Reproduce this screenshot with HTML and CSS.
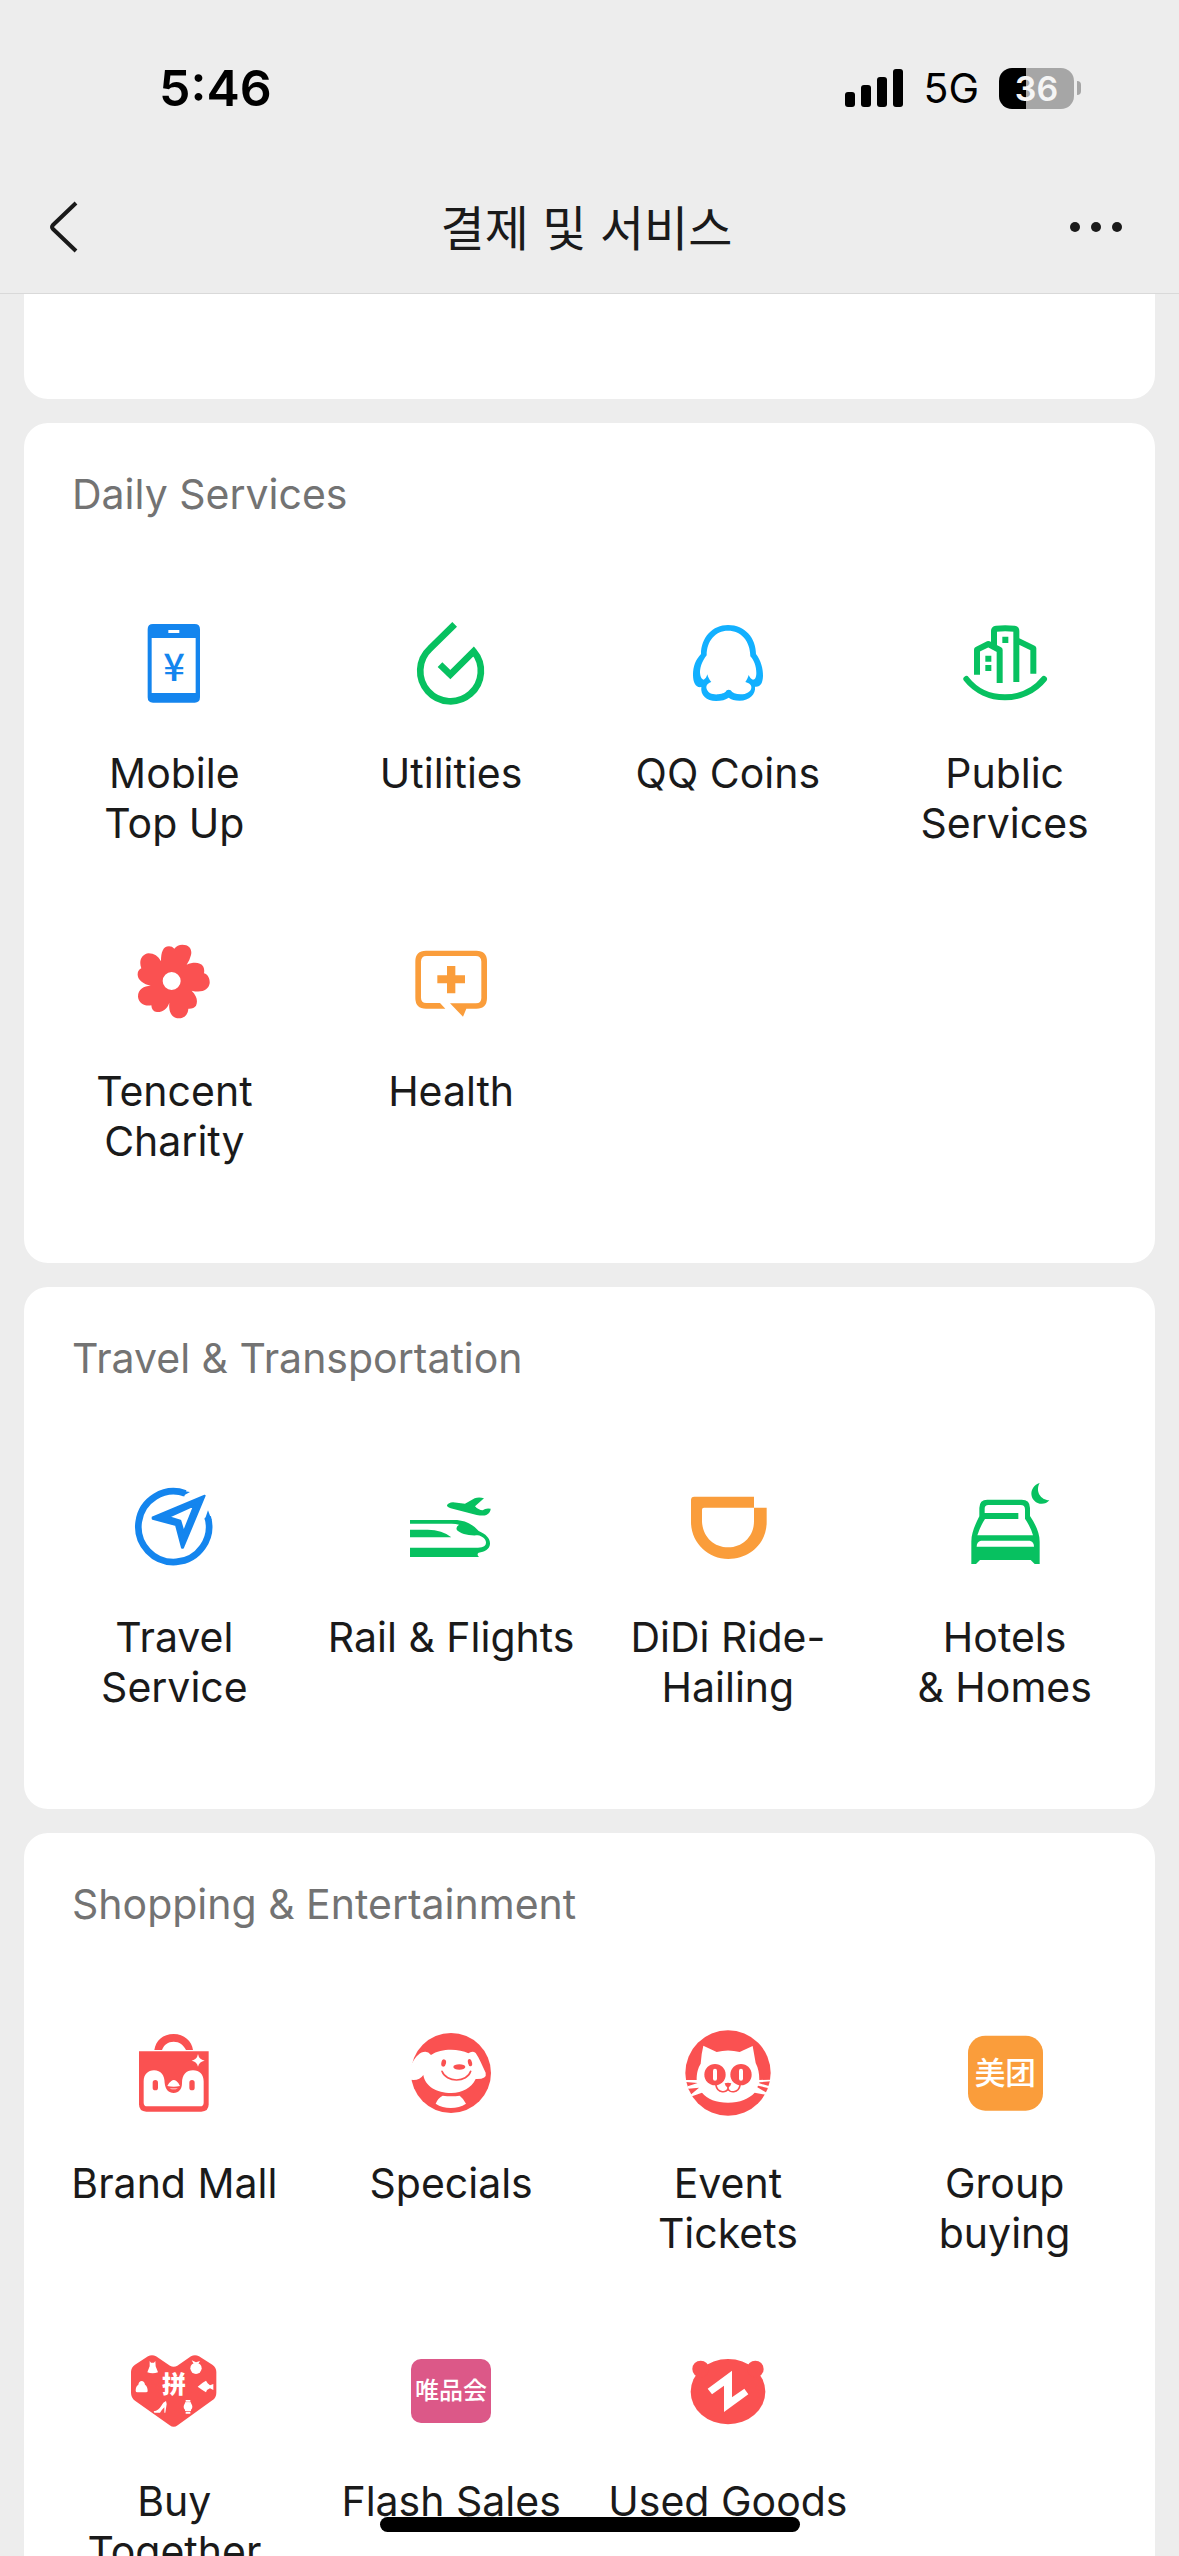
FILE: index.html
```html
<!DOCTYPE html>
<html lang="ko">
<head>
    <meta charset="UTF-8">
    <meta name="viewport" content="width=device-width, initial-scale=1.0">
    <title>결제 및 서비스</title>
    <link rel="stylesheet" href="styles.css">
</head>
<body>
    <div class="screen">
        <header class="header">
            <div class="status-bar">
                <span class="time">5:46</span>
                <div class="status-right">
                    <svg class="signal" viewBox="0 0 58 38" aria-hidden="true">
                        <rect x="0" y="23" width="10" height="15" rx="3"/>
                        <rect x="16" y="16" width="10" height="22" rx="3"/>
                        <rect x="32" y="8" width="10" height="30" rx="3"/>
                        <rect x="48" y="0" width="10" height="38" rx="3"/>
                    </svg>
                    <span class="network">5G</span>
                    <div class="battery">
                        <span class="battery-level">36</span>
                        <span class="battery-cap"></span>
                    </div>
                </div>
            </div>
            <nav class="nav-bar">
                <button class="nav-btn" aria-label="Back">
                    <svg class="back-icon" viewBox="0 0 28 52"><path d="M26 2 3 24q-2 2 0 4L26 50"/></svg>
                </button>
                <h1>결제 및 서비스</h1>
                <button class="nav-btn nav-more" aria-label="More">
                    <svg class="more-icon" viewBox="0 0 54 12"><circle cx="6" cy="6" r="5"/><circle cx="27" cy="6" r="5"/><circle cx="48" cy="6" r="5"/></svg>
                </button>
            </nav>
        </header>

        <main class="content">
            <section class="card card-cut"></section>

            <section class="card">
                <h2>Daily Services</h2>
                <div class="grid">
                    <a class="item" href="#">
                        <svg class="icon blue" viewBox="79 45 288 288">
                            <path fill-rule="evenodd" d="M160 72H285Q301 72 301 88V292Q301 308 285 308H160Q144 308 144 292V88Q144 72 160 72ZM156 114V279H288V114ZM206 90V99H239V90Z"/>
                            <text class="yen" x="223" y="243">¥</text>
                        </svg>
                        <span>Mobile<br>Top Up</span>
                    </a>
                    <a class="item" href="#">
                        <svg class="icon green line" viewBox="909 45 288 288">
                            <path stroke-width="20" d="M1064 73 990 146A91 91 0 1 0 1121 154L1051 224 1020 194"/>
                        </svg>
                        <span>Utilities</span>
                    </a>
                    <a class="item" href="#">
                        <svg class="icon sky" viewBox="60 45 288 288">
                            <path fill-rule="evenodd" d="M204 75C255 75 288 114 288 162C303 181 310 208 309 229C308 250 301 262 285 260C288 282 268 302 239 302C225 302 213 299 206 293C198 299 184 303 168 303C139 303 121 286 124 261C108 264 99 249 99 225C99 199 107 179 123 162C123 112 158 75 204 75ZM204 92C166 92 140 123 140 166C126 183 117 207 121 226C123 235 127 239 131 239C136 237 140 231 142 223C144 232 148 239 154 246C142 250 137 257 140 267C145 280 157 284 174 283C190 282 197 277 200 271Q206 267 212 271C217 279 227 283 242 283C259 283 273 275 274 263C275 255 268 249 256 246C261 239 264 232 266 225C269 232 273 237 279 239C285 239 289 232 289 219C289 199 282 181 271 169C271 123 243 92 204 92Z"/>
                        </svg>
                        <span>QQ Coins</span>
                    </a>
                    <a class="item" href="#">
                        <svg class="icon green" viewBox="890 45 288 288">
                            <g class="line" stroke-width="18">
                                <path stroke-linejoin="round" d="M950 224V149L984 132 1018 150V249M1001 136V93Q1001 87 1008 86Q1034 83 1062 86Q1068 87 1068 93V246M1070 121 1119 145V221"/>
                                <path stroke-linecap="round" d="M918 237C975 310 1092 310 1151 237"/>
                            </g>
                            <path d="M1026 110H1044V129H1026ZM975 167H993V185H975ZM975 195H993V213H975Z"/>
                        </svg>
                        <span>Public<br>Services</span>
                    </a>
                    <a class="item" href="#">
                        <svg class="icon red" viewBox="79 39 288 288">
                            <path fill-rule="evenodd" d="M184 124C184 97 190 79 208 79Q218 79 224 86Q233 74 248 74C269 74 278 88 274 105Q270 122 261 134C281 126 302 126 311 140Q315 148 313 160C326 164 331 177 330 190C327 210 306 220 276 212C292 229 295 243 289 257Q282 267 266 266C265 284 253 295 238 295C216 295 206 276 209 248C202 268 188 277 172 276Q156 275 155 256C135 260 117 250 115 230C115 207 133 198 153 197C132 193 115 181 114 165Q113 151 125 145C116 122 127 102 147 100C163 100 176 108 184 124ZM216 156A27 27 0 1 0 216 210A27 27 0 1 0 216 156Z"/>
                        </svg>
                        <span>Tencent<br>Charity</span>
                    </a>
                    <a class="item" href="#">
                        <svg class="icon orange" viewBox="909 39 288 288">
                            <path fill-rule="evenodd" d="M978 92H1129Q1161 92 1161 124V234Q1161 266 1129 266H1099L1089 290 1050 250H1128Q1144 250 1144 234V125Q1144 108 1127 108H979Q963 108 963 125V233Q963 249 979 249H1020L1036 266H978Q946 266 946 234V124Q946 92 978 92ZM1041 138H1066V166H1095V190H1066V220H1041V190H1012V166H1041Z"/>
                        </svg>
                        <span>Health</span>
                    </a>
                </div>
            </section>

            <section class="card">
                <h2>Travel &amp; Transportation</h2>
                <div class="grid">
                    <a class="item" href="#">
                        <svg class="icon blue" viewBox="79 57 288 288">
                            <path class="line" stroke-width="20" d="M257 100A106 106 0 1 0 324 171"/>
                            <path d="M271 96 248 109 238 91ZM325 151 336 180 315 180Z"/>
                            <path fill-rule="evenodd" stroke="#1485ee" stroke-width="6" stroke-linejoin="round" d="M315 107 250 263H247L229 195 159 176V172ZM284 136 206 171 242 182 252 216Z"/>
                        </svg>
                        <span>Travel<br>Service</span>
                    </a>
                    <a class="item" href="#">
                        <svg class="icon green" viewBox="909 57 288 288">
                            <path d="M1041 136Q1045 128 1059 127L1095 131 1124 115Q1137 110 1152 115L1125 139Q1135 150 1148 151Q1157 143 1172 146Q1172 157 1159 165Q1150 168 1130 165L1052 145Q1040 141 1041 136Z"/>
                            <path d="M930 180H1063C1095 180 1117 192 1136 213C1158 222 1171 236 1170 252C1169 268 1154 275 1136 278Q1129 283 1137 291H930V263H1134C1151 263 1158 258 1158 247C1157 237 1147 228 1133 226C1105 228 1082 221 1071 211Q1066 201 1077 194Q1068 191 1055 191H930ZM930 209H983Q1027 209 1054 232H930Z"/>
                        </svg>
                        <span>Rail &amp; Flights</span>
                    </a>
                    <a class="item" href="#">
                        <svg class="icon orange" viewBox="60 57 288 288">
                            <path fill-rule="evenodd" d="M103 110H282V143H320V188C319 250 270 297 205 297C143 297 93 247 93 186V120Q93 110 103 110ZM132 143Q126 143 126 149V186C129 230 160 262 205 262C248 262 282 229 282 184V143Z"/>
                        </svg>
                        <span>DiDi Ride-<br>Hailing</span>
                    </a>
                    <a class="item" href="#">
                        <svg class="icon green" viewBox="890 57 288 288">
                            <path d="M1138 69C1124 94 1141 120 1167 121C1160 130 1149 133 1138 131C1106 123 1104 80 1138 69Z"/>
                            <path fill-rule="evenodd" d="M981 119H1084Q1109 119 1109 144V168C1127 195 1138 220 1138 245V312H1123L1111 300H959L947 312H933V245C933 218 945 193 957 169V144Q957 119 981 119ZM984 135Q973 135 973 146V159H1074V177H974Q960 198 951 226H1118Q1110 199 1094 176V148Q1094 135 1081 135ZM962 242Q949 245 949 260H1121Q1121 245 1108 242Z"/>
                        </svg>
                        <span>Hotels<br>&amp; Homes</span>
                    </a>
                </div>
            </section>

            <section class="card">
                <h2>Shopping &amp; Entertainment</h2>
                <div class="grid">
                    <a class="item" href="#">
                        <svg class="icon red" viewBox="79 45 288 288">
                            <path d="M164 120C168 92 190 72 222 72C253 72 277 93 280 120H259C252 105 239 95 222 95C205 95 193 104 187 120Z"/>
                            <path d="M118 124H327V283Q327 305 305 305H140Q118 305 118 283Z"/>
                            <g class="white">
                                <path d="M295 132Q298 149 315 152Q298 155 295 170Q292 155 276 152Q292 149 295 132Z"/>
                                <path d="M132 214C132 193 145 181 163 181C184 181 195 196 195 219C197 239 207 249 222 249C237 249 247 238 247 219C247 194 260 181 280 181C300 181 312 194 312 214V278Q312 289 301 289H143Q132 289 132 278Z"/>
                            </g>
                            <rect x="159" y="210" width="16" height="31" rx="8"/>
                            <rect x="269" y="210" width="16" height="31" rx="8"/>
                            <path d="M203 230H241Q237 243 222 243Q207 243 203 230Z"/>
                            <path class="white" d="M203 228Q206 219 215 213Q222 207 230 213Q238 219 241 228Q222 232 203 228ZM209 234Q222 237 235 234L228 238H216Z"/>
                        </svg>
                        <span>Brand Mall</span>
                    </a>
                    <a class="item" href="#">
                        <svg class="icon red" viewBox="909 45 288 288">
                            <circle cx="1053" cy="189" r="120"/>
                            <path class="white" d="M932 168C943 146 955 129 970 126Q983 122 993 135C1024 114 1077 116 1105 130Q1117 121 1127 129C1138 145 1147 167 1157 188Q1162 208 1127 207C1114 234 1088 248 1054 249C1009 249 975 228 970 195Q960 210 941 210L932 209Z"/>
                            <path class="white" d="M1028 257Q1055 260 1079 257Q1091 266 1098 281Q1078 294 1052 294Q1027 294 1007 281Q1013 265 1028 257Z"/>
                            <ellipse cx="1031" cy="159" rx="7" ry="11" transform="rotate(12 1031 159)"/>
                            <ellipse cx="1110" cy="158" rx="6" ry="11" transform="rotate(-14 1110 158)"/>
                            <ellipse cx="1078" cy="171" rx="18" ry="8"/>
                            <path class="line-red" stroke-width="5" d="M1026 184C1039 219 1101 218 1112 184"/>
                        </svg>
                        <span>Specials</span>
                    </a>
                    <a class="item" href="#">
                        <svg class="icon red" viewBox="60 45 288 288">
                            <circle cx="204" cy="189" r="128"/>
                            <path class="white" d="M130 107 170 126Q204 117 239 126L278 108 287 159Q298 180 298 210L331 209V214L298 217V220L329 229 327 235 294 227 292 232 320 248 316 254 284 248C267 266 240 278 204 278C169 278 142 267 126 248L96 259 92 254 117 233 85 236 83 229 113 219 78 216V210H110C110 188 114 174 122 161Q124 131 130 107Z"/>
                            <circle cx="165" cy="194" r="32"/>
                            <circle cx="243" cy="194" r="32"/>
                            <rect class="white" x="159" y="176" width="12" height="36" rx="6"/>
                            <rect class="white" x="237" y="176" width="12" height="36" rx="6"/>
                            <path d="M194 220Q204 216 214 220Q213 229 204 233Q195 229 194 220Z"/>
                            <path class="line-red" stroke-width="5" d="M204 229V236M168 226C172 250 202 250 204 235C207 250 236 250 240 226"/>
                        </svg>
                        <span>Event<br>Tickets</span>
                    </a>
                    <a class="item" href="#">
                        <svg class="icon orange" viewBox="890 45 288 288">
                            <rect x="923" y="77" width="225" height="225" rx="52"/>
                            <text class="logo-text meituan" x="1035" y="223">美团</text>
                        </svg>
                        <span>Group<br>buying</span>
                    </a>
                    <a class="item" href="#">
                        <svg class="icon red" viewBox="79 39 288 288">
                            <path d="M145 79Q157 72 169 79L211 107Q222 113 233 107L274 79Q286 72 298 79L338 104Q350 112 350 126V188Q350 203 338 211L234 286Q222 295 210 286L106 212Q94 203 94 188V126Q94 112 106 104Z"/>
                            <text class="logo-text pin" x="223" y="190">拼</text>
                            <g class="white">
                                <path d="M150 93 154 98H163L167 93 168 109 175 127Q159 133 143 127L150 109Z"/>
                                <circle cx="289" cy="115" r="17"/>
                                <path d="M276 91 289 97 301 93 296 101H282Z"/>
                                <path d="M108 183Q108 168 116 164Q118 153 126 153Q134 153 136 164Q144 169 144 183Q144 187 139 187H113Q108 187 108 183Z"/>
                                <path d="M294 170 309 158 319 152 324 160 331 166 341 162V180L331 175 322 180 319 187 308 180Z"/>
                                <path d="M162 244Q177 241 185 227 190 216 199 213L201 222 197 248H194V232Q187 239 181 248H164Z"/>
                                <circle cx="265" cy="230" r="13"/>
                                <path d="M258 210H272V215H258ZM256 217H274V243H256ZM258 245H272V251H258Z"/>
                            </g>
                        </svg>
                        <span>Buy<br>Together</span>
                    </a>
                    <a class="item" href="#">
                        <svg class="icon pink" viewBox="909 39 288 288">
                            <rect x="933" y="87" width="240" height="192" rx="30"/>
                            <text class="logo-text vip" x="1053" y="208">唯品会</text>
                        </svg>
                        <span>Flash Sales</span>
                    </a>
                    <a class="item" href="#">
                        <svg class="icon red" viewBox="240 39 288 288">
                            <ellipse cx="384" cy="185" rx="112" ry="98"/>
                            <circle cx="302" cy="117" r="25"/>
                            <circle cx="466" cy="117" r="25"/>
                            <path class="white" d="M323 176 396 122V202L433 176 445 193 372 246V167L336 193Z"/>
                        </svg>
                        <span>Used Goods</span>
                    </a>
                </div>
            </section>
        </main>

        <div class="home-indicator"></div>
    </div>
</body>
</html>
```
FILE: styles.css
```css
* {
    box-sizing: border-box;
}
body {
    margin: 0;
    background-color: #ededed;
    color: #1a1a1a;
    font-family: Inter, 'Noto Sans CJK KR', sans-serif;
}
.screen {
    position: relative;
    display: flex;
    flex-direction: column;
    height: 100vh;
    overflow: hidden;
}
.header {
    border-bottom: 1px solid #d9d9d9;
}
.status-bar {
    display: flex;
    justify-content: space-between;
    align-items: center;
    height: 176px;
    padding: 0 98px 0 159px;
    color: #000;
}
.time {
    font-size: 50px;
    font-weight: 600;
}
.status-right {
    display: flex;
    align-items: center;
    gap: 20px;
}
.signal {
    width: 58px;
    height: 38px;
}
.network {
    font-size: 41px;
}
.battery {
    display: flex;
    align-items: center;
    gap: 3px;
}
.battery-level {
    width: 75px;
    border-radius: 13px;
    background: linear-gradient(to right, #000 36%, #a6a6a6 36%);
    color: #f5f5f5;
    font-size: 34px;
    font-weight: 600;
    line-height: 41px;
    text-align: center;
}
.battery-cap {
    width: 4px;
    height: 14px;
    border-radius: 0 4px 4px 0;
    background-color: #a6a6a6;
}
.nav-bar {
    display: flex;
    justify-content: space-between;
    align-items: center;
    height: 117px;
    padding: 0 56px 16px 50px;
}
.nav-btn {
    display: flex;
    width: 60px;
    padding: 0;
    border: none;
    background: none;
    cursor: pointer;
}
.nav-more {
    justify-content: flex-end;
}
.back-icon {
    width: 28px;
    height: 52px;
    fill: none;
    stroke: #1a1a1a;
    stroke-width: 4;
}
.more-icon {
    width: 54px;
    height: 12px;
    fill: #1a1a1a;
}
h1 {
    margin: 0 0 4px;
    font-family: 'Noto Sans CJK KR', sans-serif;
    font-size: 48px;
    font-weight: 400;
    line-height: 60px;
}
.content {
    display: flex;
    flex: 1;
    flex-direction: column;
    gap: 24px;
    min-height: 0;
    padding: 0 24px;
    overflow-y: auto;
    scrollbar-width: none;
}
.card {
    flex-shrink: 0;
    padding: 46px 12px 97px;
    border-radius: 24px;
    background-color: #fff;
}
.card-cut {
    height: 105px;
    padding: 0;
    border-radius: 0 0 24px 24px;
}
h2 {
    margin: 0 36px 96px;
    color: #737373;
    font-size: 41px;
    font-weight: 400;
    line-height: 50px;
}
.grid {
    display: grid;
    grid-template-columns: repeat(4, 1fr);
    row-gap: 85px;
}
.item {
    display: flex;
    flex-direction: column;
    align-items: center;
    gap: 37px;
    color: #1a1a1a;
    font-size: 41px;
    line-height: 50px;
    text-align: center;
    text-decoration: none;
    white-space: nowrap;
}
.icon {
    width: 96px;
    height: 96px;
}
.blue {
    fill: #1485ee;
}
.sky {
    fill: #12b0ff;
}
.green {
    fill: #07c160;
}
.red {
    fill: #fa5151;
}
.orange {
    fill: #fa9d3b;
}
.pink {
    fill: #dc5888;
}
.white {
    fill: #fff;
}
.line {
    fill: none;
}
.blue .line {
    stroke: #1485ee;
}
.green.line,
.green .line {
    stroke: #07c160;
}
.line-red {
    fill: none;
    stroke: #fa5151;
    stroke-linecap: round;
}
.yen {
    font-family: 'Noto Sans CJK SC', sans-serif;
    font-size: 114px;
    font-weight: 500;
    text-anchor: middle;
}
.logo-text {
    fill: #fff;
    font-family: 'Noto Sans CJK SC', sans-serif;
    font-weight: 500;
    text-anchor: middle;
}
.meituan {
    font-size: 92px;
}
.pin {
    font-size: 72px;
    font-weight: 900;
}
.vip {
    font-size: 72px;
}
.home-indicator {
    position: absolute;
    bottom: 24px;
    left: 50%;
    width: 420px;
    height: 15px;
    margin-left: -210px;
    border-radius: 8px;
    background-color: #000;
}
```
